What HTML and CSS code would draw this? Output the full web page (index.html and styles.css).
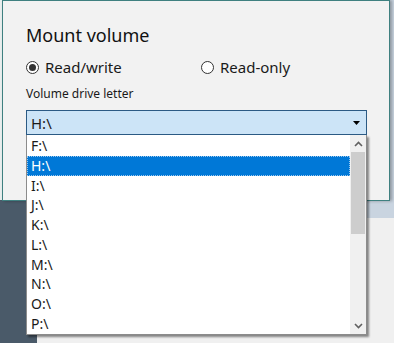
FILE: index.html
```html
<!DOCTYPE html>
<html lang="en">
<head>
  <meta charset="UTF-8">
  <meta name="viewport" content="width=device-width, initial-scale=1.0">
  <title>Mount volume</title>
  <link rel="stylesheet" href="styles.css">
</head>
<body>
  <div class="app">
    <!-- Background window -->
    <div class="sidebar">
      <div class="sidebar-top"></div>
    </div>
    <div class="main">
      <div class="band"></div>
      <div class="content"></div>
    </div>

    <!-- Dialog -->
    <div class="dialog">
      <h1 class="dialog-title">Mount volume</h1>

      <div class="mode-row">
        <label class="radio">
          <span class="radio-dot checked"></span>
          Read/write
        </label>
        <label class="radio">
          <span class="radio-dot"></span>
          Read-only
        </label>
      </div>

      <div class="field-label">Volume drive letter</div>

      <div class="combo-wrap">
        <div class="combo">
          <span class="combo-value">H:\</span>
          <svg class="combo-arrow" width="7" height="4" viewBox="0 0 7 4">
            <path d="M0 0h7L3.5 4z" fill="#000"/>
          </svg>
        </div>

        <!-- Open drop-down list -->
        <div class="dropdown">
          <ul class="options">
            <li>F:\</li>
            <li class="selected">H:\</li>
            <li>I:\</li>
            <li>J:\</li>
            <li>K:\</li>
            <li>L:\</li>
            <li>M:\</li>
            <li>N:\</li>
            <li>O:\</li>
            <li>P:\</li>
          </ul>
          <div class="scrollbar">
            <div class="scroll-btn">
              <svg width="9" height="6" viewBox="0 0 9 6">
                <path d="M1 5L4.5 1.5 8 5" fill="none" stroke="#606060" stroke-width="1.6"/>
              </svg>
            </div>
            <div class="scroll-track">
              <div class="scroll-thumb"></div>
            </div>
            <div class="scroll-btn">
              <svg width="9" height="6" viewBox="0 0 9 6">
                <path d="M1 1L4.5 4.5 8 1" fill="none" stroke="#606060" stroke-width="1.6"/>
              </svg>
            </div>
          </div>
        </div>
      </div>
    </div>
  </div>
</body>
</html>
```

FILE: styles.css
```css
* {
  margin: 0;
  padding: 0;
  box-sizing: border-box;
}

body {
  font-family: "Segoe UI", "Noto Sans", sans-serif;
  width: 394px;
  height: 343px;
  overflow: hidden;
  background: #f0f0f0;
  color: #000;
}

.app {
  position: relative;
  display: flex;
  width: 394px;
  height: 343px;
}

/* Background window */
.sidebar {
  width: 37px;
  background: #4a5a69;
}

.sidebar-top {
  height: 200px;
  background: #e9eeee;
}

.main {
  flex: 1;
  display: flex;
  flex-direction: column;
}

.band {
  height: 218px;
  background: #c9d4e0;
}

.content {
  flex: 1;
  background: #f0f0f0;
}

/* Dialog */
.dialog {
  position: absolute;
  top: 0;
  left: 2px;
  width: 388px;
  height: 201px;
  background: #f2f2f2;
  border: 1px solid #3f8080;
  box-shadow: 2px 0 3px rgba(0, 0, 0, 0.3);
  padding: 22px 22px 0 23px;
}

.dialog-title {
  font-size: 18px;
  font-weight: 400;
  line-height: 24px;
  color: #111;
}

.mode-row {
  display: grid;
  grid-template-columns: 175px auto;
  margin-top: 10px;
}

.radio {
  display: flex;
  align-items: center;
  gap: 6px;
  font-size: 15px;
  line-height: 20px;
  color: #1a1a1a;
}

.radio-dot {
  width: 13px;
  height: 13px;
  border: 1px solid #333;
  border-radius: 50%;
  background: #fff;
  display: flex;
  align-items: center;
  justify-content: center;
}

.radio-dot.checked::after {
  content: "";
  width: 7px;
  height: 7px;
  border-radius: 50%;
  background: #333;
}

.field-label {
  font-size: 12px;
  line-height: 16px;
  margin-top: 9px;
  color: #1a1a1a;
}

/* Combo box */
.combo-wrap {
  position: relative;
  margin-top: 8px;
  width: 341px;
}

.combo {
  height: 25px;
  border: 1px solid #2b5a84;
  background: #cce4f7;
  display: flex;
  align-items: center;
  justify-content: space-between;
  padding: 0 6px 0 4px;
}

.combo-value {
  font-size: 15px;
  line-height: 20px;
  color: #1a1a1a;
}

.combo-arrow {
  display: block;
}

.dropdown {
  position: absolute;
  top: 25px;
  left: 0;
  width: 341px;
  height: 200px;
  background: #fff;
  border: 1px solid #8c8c8c;
  border-top: none;
  box-shadow: 2px 2px 2px rgba(0, 0, 0, 0.45);
  display: flex;
  overflow: hidden;
}

.options {
  list-style: none;
  flex: 1;
  padding-top: 1px;
}

.options li {
  height: 19.75px;
  line-height: 19.75px;
  font-size: 14px;
  padding-left: 4px;
  color: #1a1a1a;
}

.options li.selected {
  background: #0078d7;
  color: #fff;
  outline: 1px dotted #9cc8ee;
  outline-offset: -1px;
}

/* Scrollbar */
.scrollbar {
  width: 16px;
  display: flex;
  flex-direction: column;
  background: #f0f0f0;
}

.scroll-btn {
  height: 17px;
  display: flex;
  align-items: center;
  justify-content: center;
}

.scroll-track {
  flex: 1;
  padding-top: 0;
}

.scroll-thumb {
  height: 82px;
  margin: 0 1px;
  background: #cdcdcd;
}
```
